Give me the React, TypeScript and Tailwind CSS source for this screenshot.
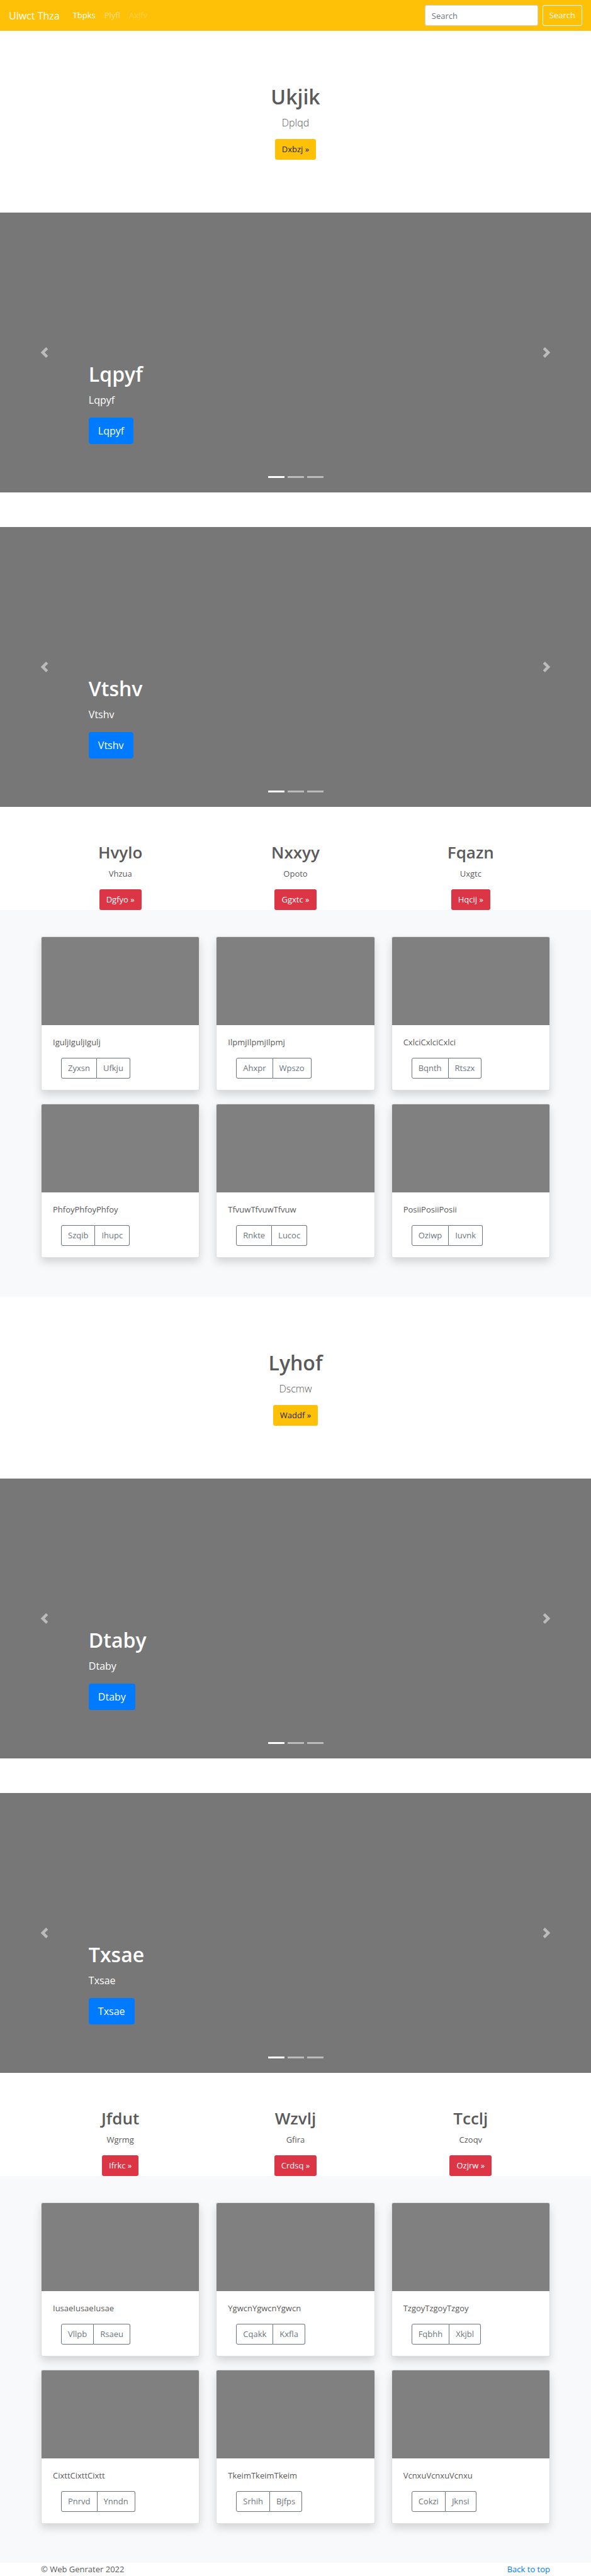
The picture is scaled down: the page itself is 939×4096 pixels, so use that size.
type Feature = { title: string; text: string; action: string };
type Item = { text: string; first: string; second: string };
type Block = {
  hero: Feature;
  slides: string[];
  features: Feature[];
  items: Item[];
};

const blocks: Block[] = [
  {
    hero: { title: "Ukjik", text: "Dplqd", action: "Dxbzj" },
    slides: ["Lqpyf", "Vtshv"],
    features: [
      { title: "Hvylo", text: "Vhzua", action: "Dgfyo" },
      { title: "Nxxyy", text: "Opoto", action: "Ggxtc" },
      { title: "Fqazn", text: "Uxgtc", action: "Hqcij" },
    ],
    items: [
      { text: "IguljIguljIgulj", first: "Zyxsn", second: "Ufkju" },
      { text: "IlpmjIlpmjIlpmj", first: "Ahxpr", second: "Wpszo" },
      { text: "CxlciCxlciCxlci", first: "Bqnth", second: "Rtszx" },
      { text: "PhfoyPhfoyPhfoy", first: "Szqib", second: "Ihupc" },
      { text: "TfvuwTfvuwTfvuw", first: "Rnkte", second: "Lucoc" },
      { text: "PosiiPosiiPosii", first: "Oziwp", second: "Iuvnk" },
    ],
  },
  {
    hero: { title: "Lyhof", text: "Dscmw", action: "Waddf" },
    slides: ["Dtaby", "Txsae"],
    features: [
      { title: "Jfdut", text: "Wgrmg", action: "Ifrkc" },
      { title: "Wzvlj", text: "Gfira", action: "Crdsq" },
      { title: "Tcclj", text: "Czoqv", action: "Ozjrw" },
    ],
    items: [
      { text: "IusaeIusaeIusae", first: "Vllpb", second: "Rsaeu" },
      { text: "YgwcnYgwcnYgwcn", first: "Cqakk", second: "Kxfla" },
      { text: "TzgoyTzgoyTzgoy", first: "Fqbhh", second: "Xkjbl" },
      { text: "CixttCixttCixtt", first: "Pnrvd", second: "Ynndn" },
      { text: "TkeimTkeimTkeim", first: "Srhih", second: "Bjfps" },
      { text: "VcnxuVcnxuVcnxu", first: "Cokzi", second: "Jknsi" },
    ],
  },
];

function Navbar() {
  return (
    <nav className="flex h-[49px] items-center justify-between bg-[#ffc107] px-3.5">
      <div className="flex items-center">
        <a href="#top" className="mr-3.5 text-[16px] leading-6 text-white">
          Ulwct Thza
        </a>
        <a href="#top" className="px-[7px] text-white">
          Tbpks
        </a>
        <a href="#top" className="px-[7px] text-white/50">
          Plyfl
        </a>
        <a href="#top" className="px-[7px] text-white/25">
          Axjfv
        </a>
      </div>
      <form className="flex gap-[7px]" onSubmit={(e) => e.preventDefault()}>
        <input
          type="search"
          placeholder="Search"
          aria-label="Search"
          className="h-[33px] w-[180px] rounded-[3px] border border-[#ced4da] bg-white px-2.5 text-[#495057] outline-none placeholder:text-[#6c757d]"
        />
        <button
          type="submit"
          className="h-[33px] rounded-[3px] border border-[#f8f9fa] px-2.5 text-[#f8f9fa]"
        >
          Search
        </button>
      </form>
    </nav>
  );
}

function Hero({ title, text, action }: Feature) {
  return (
    <section className="flex flex-col items-center bg-white py-[84px] text-center">
      <h1 className="mb-[7px] text-[32px] leading-[42px] font-semibold">{title}</h1>
      <p className="mb-[13px] text-[16px] leading-[26px] font-light">{text}</p>
      <a
        href="#top"
        className="flex h-[33px] items-center rounded-[3px] bg-[#ffc107] px-[11px] text-[#212529]"
      >
        {action} »
      </a>
    </section>
  );
}

function Carousel({ label }: { label: string }) {
  return (
    <section
      aria-label={label}
      className="relative flex h-[445px] flex-col justify-end bg-[#777777] pb-[77px] text-white"
    >
      <div className="mx-[15%] flex flex-col items-start">
        <h2 className="mb-[7px] text-[32px] leading-[42px] font-semibold">{label}</h2>
        <p className="mb-[15px] text-[16px] leading-[26px]">{label}</p>
        <a
          href="#top"
          className="flex h-[42px] items-center rounded-[4px] bg-[#007bff] px-[15px] text-[16px]"
        >
          {label}
        </a>
      </div>
      <button
        type="button"
        aria-label="Previous"
        className="absolute inset-y-0 left-0 flex w-[15%] items-center justify-center opacity-50"
      >
        <svg viewBox="0 0 8 8" className="size-[17px]" fill="#fff" aria-hidden="true">
          <path d="M5.25 0l-4 4 4 4 1.5-1.5-2.5-2.5 2.5-2.5-1.5-1.5z" />
        </svg>
      </button>
      <button
        type="button"
        aria-label="Next"
        className="absolute inset-y-0 right-0 flex w-[15%] items-center justify-center opacity-50"
      >
        <svg viewBox="0 0 8 8" className="size-[17px]" fill="#fff" aria-hidden="true">
          <path d="M2.75 0l-1.5 1.5 2.5 2.5-2.5 2.5 1.5 1.5 4-4-4-4z" />
        </svg>
      </button>
      <div className="absolute inset-x-0 bottom-[23px] flex justify-center gap-[5px]">
        <button type="button" aria-label="Slide 1" className="h-[3px] w-[26px] bg-white" />
        <button type="button" aria-label="Slide 2" className="h-[3px] w-[26px] bg-white/50" />
        <button type="button" aria-label="Slide 3" className="h-[3px] w-[26px] bg-white/50" />
      </div>
    </section>
  );
}

function Features({ features }: { features: Feature[] }) {
  return (
    <section className="mx-auto grid max-w-[835px] grid-cols-3 gap-[26px] px-[13px] pt-14">
      {features.map((f) => (
        <div key={f.title} className="flex flex-col items-center text-center">
          <h2 className="mb-[7px] text-[26px] leading-[33px] font-semibold">{f.title}</h2>
          <p className="mb-3.5">{f.text}</p>
          <a
            href="#top"
            className="flex h-[33px] items-center rounded-[3px] bg-[#dc3545] px-[11px] text-white"
          >
            {f.action} »
          </a>
        </div>
      ))}
    </section>
  );
}

function Album({ items }: { items: Item[] }) {
  return (
    <section className="bg-[#f8f9fa] pt-[42px] pb-[62px]">
      <div className="mx-auto grid max-w-[835px] grid-cols-3 gap-x-[26px] gap-y-[21px] px-[13px]">
        {items.map((item) => (
          <article
            key={item.text}
            className="overflow-hidden rounded-[3px] border border-black/13 bg-white bg-clip-border shadow-[0_7px_14px_rgba(0,0,0,0.15)]"
          >
            <div className="h-[140px] bg-[#808080]" />
            <div className="px-[18px] pt-[17px] pb-[18px]">
              <p className="mb-3.5">{item.text}</p>
              <div className="ml-[13px] flex">
                <button
                  type="button"
                  className="h-[33px] rounded-l-[3px] border border-[#6c757d] px-2.5 text-[#6c757d]"
                >
                  {item.first}
                </button>
                <button
                  type="button"
                  className="h-[33px] rounded-r-[3px] border border-l-0 border-[#6c757d] px-2.5 text-[#6c757d]"
                >
                  {item.second}
                </button>
              </div>
            </div>
          </article>
        ))}
      </div>
    </section>
  );
}

export default function App() {
  return (
    <div
      id="top"
      className="bg-white font-['Open_Sans','Noto_Sans',sans-serif] text-[13px] leading-[21px] text-[#5a5a5a]"
    >
      <Navbar />
      <main>
        {blocks.map((block) => (
          <div key={block.hero.title}>
            <Hero {...block.hero} />
            <div className="flex flex-col gap-[55px]">
              {block.slides.map((label) => (
                <Carousel key={label} label={label} />
              ))}
            </div>
            <Features features={block.features} />
            <Album items={block.items} />
          </div>
        ))}
      </main>
      <footer className="mx-auto flex max-w-[835px] justify-between px-[13px]">
        <p>© Web Genrater 2022</p>
        <a href="#top" className="text-[#007bff]">
          Back to top
        </a>
      </footer>
    </div>
  );
}
